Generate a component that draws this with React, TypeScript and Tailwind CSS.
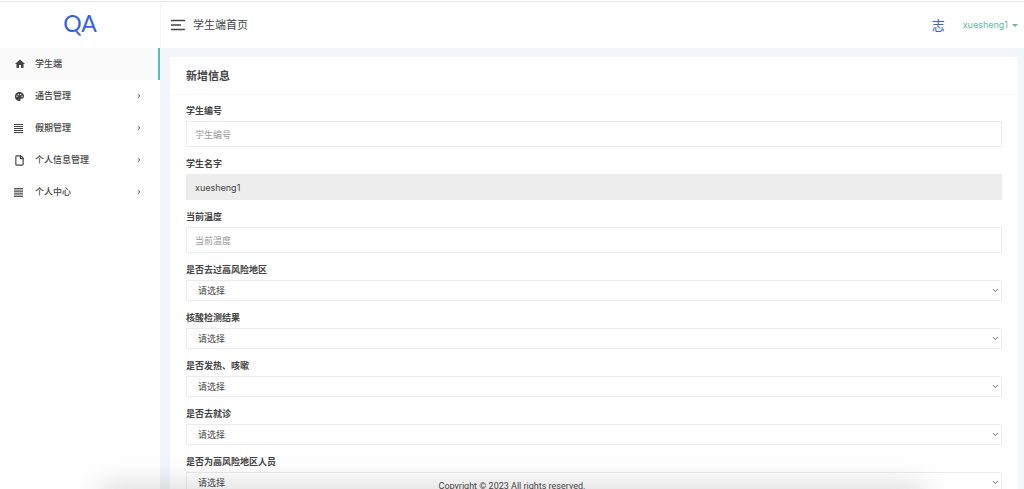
import React, { useState } from 'react'
import { ChevronDown, ChevronRight, File } from 'lucide-react'
import { MdHome, MdPalette } from 'react-icons/md'

type MenuItem = {
  label: string
  icon: React.ReactNode
  hasChildren?: boolean
}

type Field = {
  id: string
  label: string
  type: 'text' | 'select'
  value?: string
}

// justified text lines
function LinesIcon() {
  return (
    <svg className="h-[9px] w-[9px]" viewBox="0 0 9 9" stroke="currentColor" strokeWidth="1">
      <path d="M0 .5h9M0 2.5h9M0 4.5h9M0 6.5h9M0 8.5h9" />
    </svg>
  )
}

// same idea but tighter rows, reads as a grey block
function DenseLinesIcon() {
  return (
    <svg className="h-[9px] w-[9px]" viewBox="0 0 9 9" stroke="currentColor" strokeWidth=".9">
      <path d="M0 .5h9M0 2.1h9M0 3.7h9M0 5.3h9M0 6.9h9M0 8.5h9" />
    </svg>
  )
}

const menuItems: MenuItem[] = [
  { label: '学生端', icon: <MdHome className="h-3 w-3" /> },
  { label: '通告管理', icon: <MdPalette className="h-[11px] w-[11px]" />, hasChildren: true },
  { label: '假期管理', icon: <LinesIcon />, hasChildren: true },
  { label: '个人信息管理', icon: <File className="h-[11px] w-[11px]" strokeWidth={2.5} />, hasChildren: true },
  { label: '个人中心', icon: <DenseLinesIcon />, hasChildren: true },
]

const fields: Field[] = [
  { id: 'studentNo', label: '学生编号', type: 'text' },
  { id: 'studentName', label: '学生名字', type: 'text', value: 'xuesheng1' },
  { id: 'temperature', label: '当前温度', type: 'text' },
  { id: 'riskArea', label: '是否去过高风险地区', type: 'select' },
  { id: 'testResult', label: '核酸检测结果', type: 'select' },
  { id: 'fever', label: '是否发热、咳嗽', type: 'select' },
  { id: 'doctor', label: '是否去就诊', type: 'select' },
  { id: 'riskPerson', label: '是否为高风险地区人员', type: 'select' },
]

function Sidebar() {
  const [active, setActive] = useState(0)

  return (
    <aside className="flex w-40 shrink-0 flex-col bg-white">
      <a href="#" className="flex h-[46px] items-start justify-center pt-[9px] font-['Lato',sans-serif] text-[23px] leading-6 text-[#3563e0]">
        QA
      </a>
      <nav>
        {menuItems.map((item, index) => (
          <button
            key={item.label}
            onClick={() => setActive(index)}
            className={`flex h-8 w-full items-center border-r-2 pr-4 pl-[14px] text-left font-medium ${active === index ? 'border-[#55bfb0] bg-[#fafafa]' : 'border-transparent'}`}
          >
            <span className="flex w-[21px] items-center text-[#444]">{item.icon}</span>
            <span className="flex-1">{item.label}</span>
            {item.hasChildren && <ChevronRight className="h-[6px] w-[6px]" strokeWidth={4} />}
          </button>
        ))}
      </nav>
    </aside>
  )
}

function Header() {
  return (
    <header className="flex h-[46px] shrink-0 items-center border-l border-[#f4f5f7] bg-white pr-[6px] pl-[10px]">
      <button aria-label="菜单" className="mr-2 text-[#444]">
        <svg className="h-[12px] w-[14px]" viewBox="0 0 14 12" stroke="currentColor" strokeWidth="1.3">
          <path d="M0 1.5h14M0 6h10M0 10.5h14" />
        </svg>
      </button>
      <h1 className="flex-1 text-[11px]">学生端首页</h1>
      <span className="mr-[18px] text-[13px] text-[#3a5fd0]">志</span>
      <button className="flex items-center gap-1 text-[#5dbba8]">
        xuesheng1
        <span className="border-x-[3px] border-t-[3px] border-x-transparent border-t-[#5dbba8]" />
      </button>
    </header>
  )
}

function FormField({ field }: { field: Field }) {
  return (
    <div className="mb-[10px]">
      <label htmlFor={field.id} className="mb-[3px] block font-bold leading-[14px]">
        {field.label}
      </label>
      {field.type === 'text' ? (
        <input
          id={field.id}
          type="text"
          placeholder={field.label}
          defaultValue={field.value}
          readOnly={!!field.value}
          className="block h-[26px] w-full border border-[#ececec] px-2 placeholder:text-[#999] read-only:bg-[#ededed]"
        />
      ) : (
        <div className="relative">
          <select id={field.id} className="block h-[21px] w-full appearance-none border border-[#ececec] bg-white px-[11px]">
            <option>请选择</option>
            <option>是</option>
            <option>否</option>
          </select>
          <ChevronDown className="pointer-events-none absolute top-[6px] right-[2px] h-[9px] w-[9px]" />
        </div>
      )}
    </div>
  )
}

export default function App() {
  return (
    <div className="relative flex h-screen flex-col overflow-hidden bg-[#f2f5f9] font-['Inter','Noto_Sans_CJK_SC',sans-serif] text-[9px] leading-[14px] text-[#444]">
      <div className="h-[2px] shrink-0 border-b border-[#e8e8e8] bg-white" />
      <div className="flex min-h-0 flex-1">
        <Sidebar />
        <div className="flex min-w-0 flex-1 flex-col">
          <Header />
          <main className="flex-1 overflow-y-auto pt-[9px] pr-[6px] pl-[10px] [scrollbar-width:none]">
            <section className="bg-white">
              <h2 className="border-b border-[#f7f7f7] px-4 pt-3 pb-[11px] text-[11px] font-bold leading-[14px]">新增信息</h2>
              <form className="px-4 pt-[9px] pb-6">
                {fields.map((field) => (
                  <FormField key={field.id} field={field} />
                ))}
              </form>
            </section>
          </main>
        </div>
      </div>

      <div className="pointer-events-none absolute inset-x-[100px] top-full h-5 shadow-[0_0_32px_0_rgba(0,0,0,0.22)]" />
      <footer className="pointer-events-none absolute inset-x-0 bottom-0 h-[10px] text-center font-['Roboto',sans-serif]">
        Copyright © 2023 All rights reserved.
      </footer>
    </div>
  )
}
